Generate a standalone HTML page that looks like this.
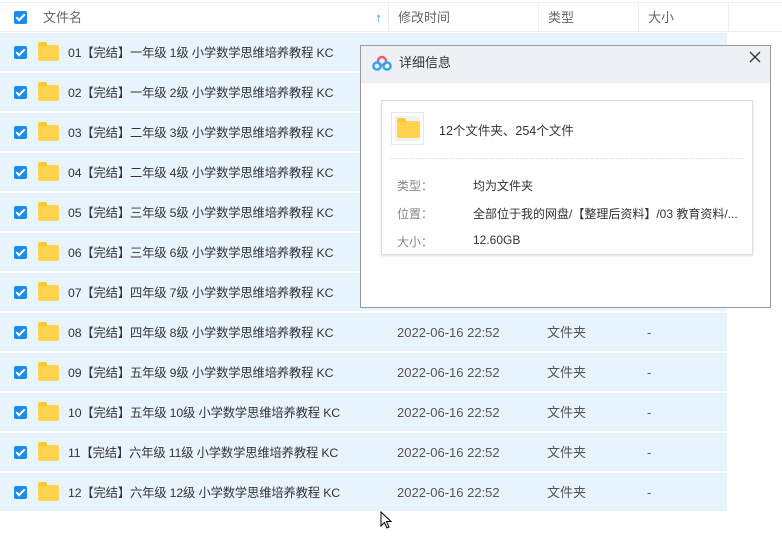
<!DOCTYPE html>
<html><head><meta charset="utf-8"><style>
body{margin:0;width:782px;height:540px;background:#fff;font-family:"Liberation Sans","Noto Sans CJK SC",sans-serif;font-size:13px;color:#333;position:relative;overflow:hidden}
.hdr{position:absolute;left:0;top:2px;width:782px;height:30px;border-top:1px solid #eee;border-bottom:1px solid #eee;box-sizing:border-box}
.hc{position:absolute;top:0;height:29px;line-height:29px;color:#666;border-right:1px solid #eee;box-sizing:border-box;padding-left:9px}
.row{position:absolute;left:0;width:727px;height:38px;background:#e8f4fd;line-height:40px}
.cb{position:absolute;left:14px;width:13px;height:13px;background:#1a8cf0;border-radius:2px}
.cb:after{content:"";position:absolute;left:4px;top:1px;width:3px;height:7px;border:solid #fff;border-width:0 2px 2px 0;transform:rotate(45deg)}
.fd{position:absolute;left:38px;width:21px;height:16px;background:#ffd34d;border-radius:2px}
.fd:before{content:"";position:absolute;left:0;top:-3px;width:9px;height:4px;background:#ffc83a;border-radius:2px 2px 0 0}
.t{position:absolute;top:0;color:#555}
.n{left:68px;color:#333;font-size:12.3px;letter-spacing:-0.15px}
.dlg{position:absolute;left:360px;top:45px;width:411px;height:263px;border:1px solid #999;background:#fff;box-sizing:border-box}
.dh{height:37px;background:#eef0f5;line-height:34px;padding-left:38px;font-size:13px;color:#333}
.box{position:absolute;left:20px;top:54px;width:372px;height:155px;border:1px solid #ddd;box-sizing:border-box;box-shadow:0 1px 2px #ddd}
.lb{position:absolute;left:15px;color:#888;font-size:12px}
.vl{position:absolute;left:91px;font-size:12px;color:#333}
</style></head><body>
<div class="hdr">
<div class="cb" style="top:8px"></div>
<div class="hc" style="left:34px;width:355px">文件名<span style="position:absolute;right:6px;color:#1a8cf0;font-weight:bold">↑</span></div>
<div class="hc" style="left:389px;width:150px">修改时间</div>
<div class="hc" style="left:539px;width:100px">类型</div>
<div class="hc" style="left:639px;width:90px">大小</div>
</div>
<div class="row" style="top:33px"><div class="cb" style="top:13px"></div><div class="fd" style="top:12px"></div><div class="t n">01【完结】一年级 1级 小学数学思维培养教程 KC</div></div>
<div class="row" style="top:73px"><div class="cb" style="top:13px"></div><div class="fd" style="top:12px"></div><div class="t n">02【完结】一年级 2级 小学数学思维培养教程 KC</div></div>
<div class="row" style="top:113px"><div class="cb" style="top:13px"></div><div class="fd" style="top:12px"></div><div class="t n">03【完结】二年级 3级 小学数学思维培养教程 KC</div></div>
<div class="row" style="top:153px"><div class="cb" style="top:13px"></div><div class="fd" style="top:12px"></div><div class="t n">04【完结】二年级 4级 小学数学思维培养教程 KC</div></div>
<div class="row" style="top:193px"><div class="cb" style="top:13px"></div><div class="fd" style="top:12px"></div><div class="t n">05【完结】三年级 5级 小学数学思维培养教程 KC</div></div>
<div class="row" style="top:233px"><div class="cb" style="top:13px"></div><div class="fd" style="top:12px"></div><div class="t n">06【完结】三年级 6级 小学数学思维培养教程 KC</div></div>
<div class="row" style="top:273px"><div class="cb" style="top:13px"></div><div class="fd" style="top:12px"></div><div class="t n">07【完结】四年级 7级 小学数学思维培养教程 KC</div></div>
<div class="row" style="top:313px"><div class="cb" style="top:13px"></div><div class="fd" style="top:12px"></div><div class="t n">08【完结】四年级 8级 小学数学思维培养教程 KC</div><div class="t" style="left:397px">2022-06-16 22:52</div><div class="t" style="left:547px">文件夹</div><div class="t" style="left:647px">-</div></div>
<div class="row" style="top:353px"><div class="cb" style="top:13px"></div><div class="fd" style="top:12px"></div><div class="t n">09【完结】五年级 9级 小学数学思维培养教程 KC</div><div class="t" style="left:397px">2022-06-16 22:52</div><div class="t" style="left:547px">文件夹</div><div class="t" style="left:647px">-</div></div>
<div class="row" style="top:393px"><div class="cb" style="top:13px"></div><div class="fd" style="top:12px"></div><div class="t n">10【完结】五年级 10级 小学数学思维培养教程 KC</div><div class="t" style="left:397px">2022-06-16 22:52</div><div class="t" style="left:547px">文件夹</div><div class="t" style="left:647px">-</div></div>
<div class="row" style="top:433px"><div class="cb" style="top:13px"></div><div class="fd" style="top:12px"></div><div class="t n">11【完结】六年级 11级 小学数学思维培养教程 KC</div><div class="t" style="left:397px">2022-06-16 22:52</div><div class="t" style="left:547px">文件夹</div><div class="t" style="left:647px">-</div></div>
<div class="row" style="top:473px"><div class="cb" style="top:13px"></div><div class="fd" style="top:12px"></div><div class="t n">12【完结】六年级 12级 小学数学思维培养教程 KC</div><div class="t" style="left:397px">2022-06-16 22:52</div><div class="t" style="left:547px">文件夹</div><div class="t" style="left:647px">-</div></div>
<div class="dlg">
<svg style="position:absolute;left:11px;top:9px" width="20" height="16" viewBox="0 0 20 16"><circle cx="10" cy="6" r="4" fill="none" stroke="#ef5a6a" stroke-width="2.4"/><circle cx="5" cy="11" r="3.6" fill="none" stroke="#2aa5f0" stroke-width="2.4"/><circle cx="15" cy="11" r="3.6" fill="none" stroke="#2aa5f0" stroke-width="2.4"/></svg>
<div class="dh">详细信息</div>
<svg style="position:absolute;left:388px;top:5px" width="12" height="12" viewBox="0 0 12 12"><path d="M1 1L11 11M11 1L1 11" stroke="#333" stroke-width="1.3"/></svg>
<div class="box">
<div style="position:absolute;left:9px;top:11px;width:33px;height:33px;border:1px solid #e6e6e6;box-sizing:border-box;background:#fff"><div style="position:absolute;left:3px;top:3px;width:25px;height:25px;background:#eef2f4"></div><div class="fd" style="left:5px;top:8px;width:23px;height:17px"></div></div>
<div style="position:absolute;left:57px;top:19px;font-size:12.5px">12个文件夹、254个文件</div>
<div style="position:absolute;left:9px;right:9px;top:57px;border-top:1px dashed #d8e2ea"></div>
<div class="lb" style="top:76px">类型：</div><div class="vl" style="top:76px">均为文件夹</div>
<div class="lb" style="top:104px">位置：</div><div class="vl" style="top:104px">全部位于我的网盘/【整理后资料】/03 教育资料/...</div>
<div class="lb" style="top:132px">大小：</div><div class="vl" style="top:132px">12.60GB</div>
</div>
</div>
<svg style="position:absolute;left:380px;top:511px" width="12" height="18" viewBox="0 0 12 18"><path d="M1 1V15L4.5 11.5L7 17L9 16L6.5 10.5H11Z" fill="#fff" stroke="#000" stroke-width="1"/></svg>
</body></html>
